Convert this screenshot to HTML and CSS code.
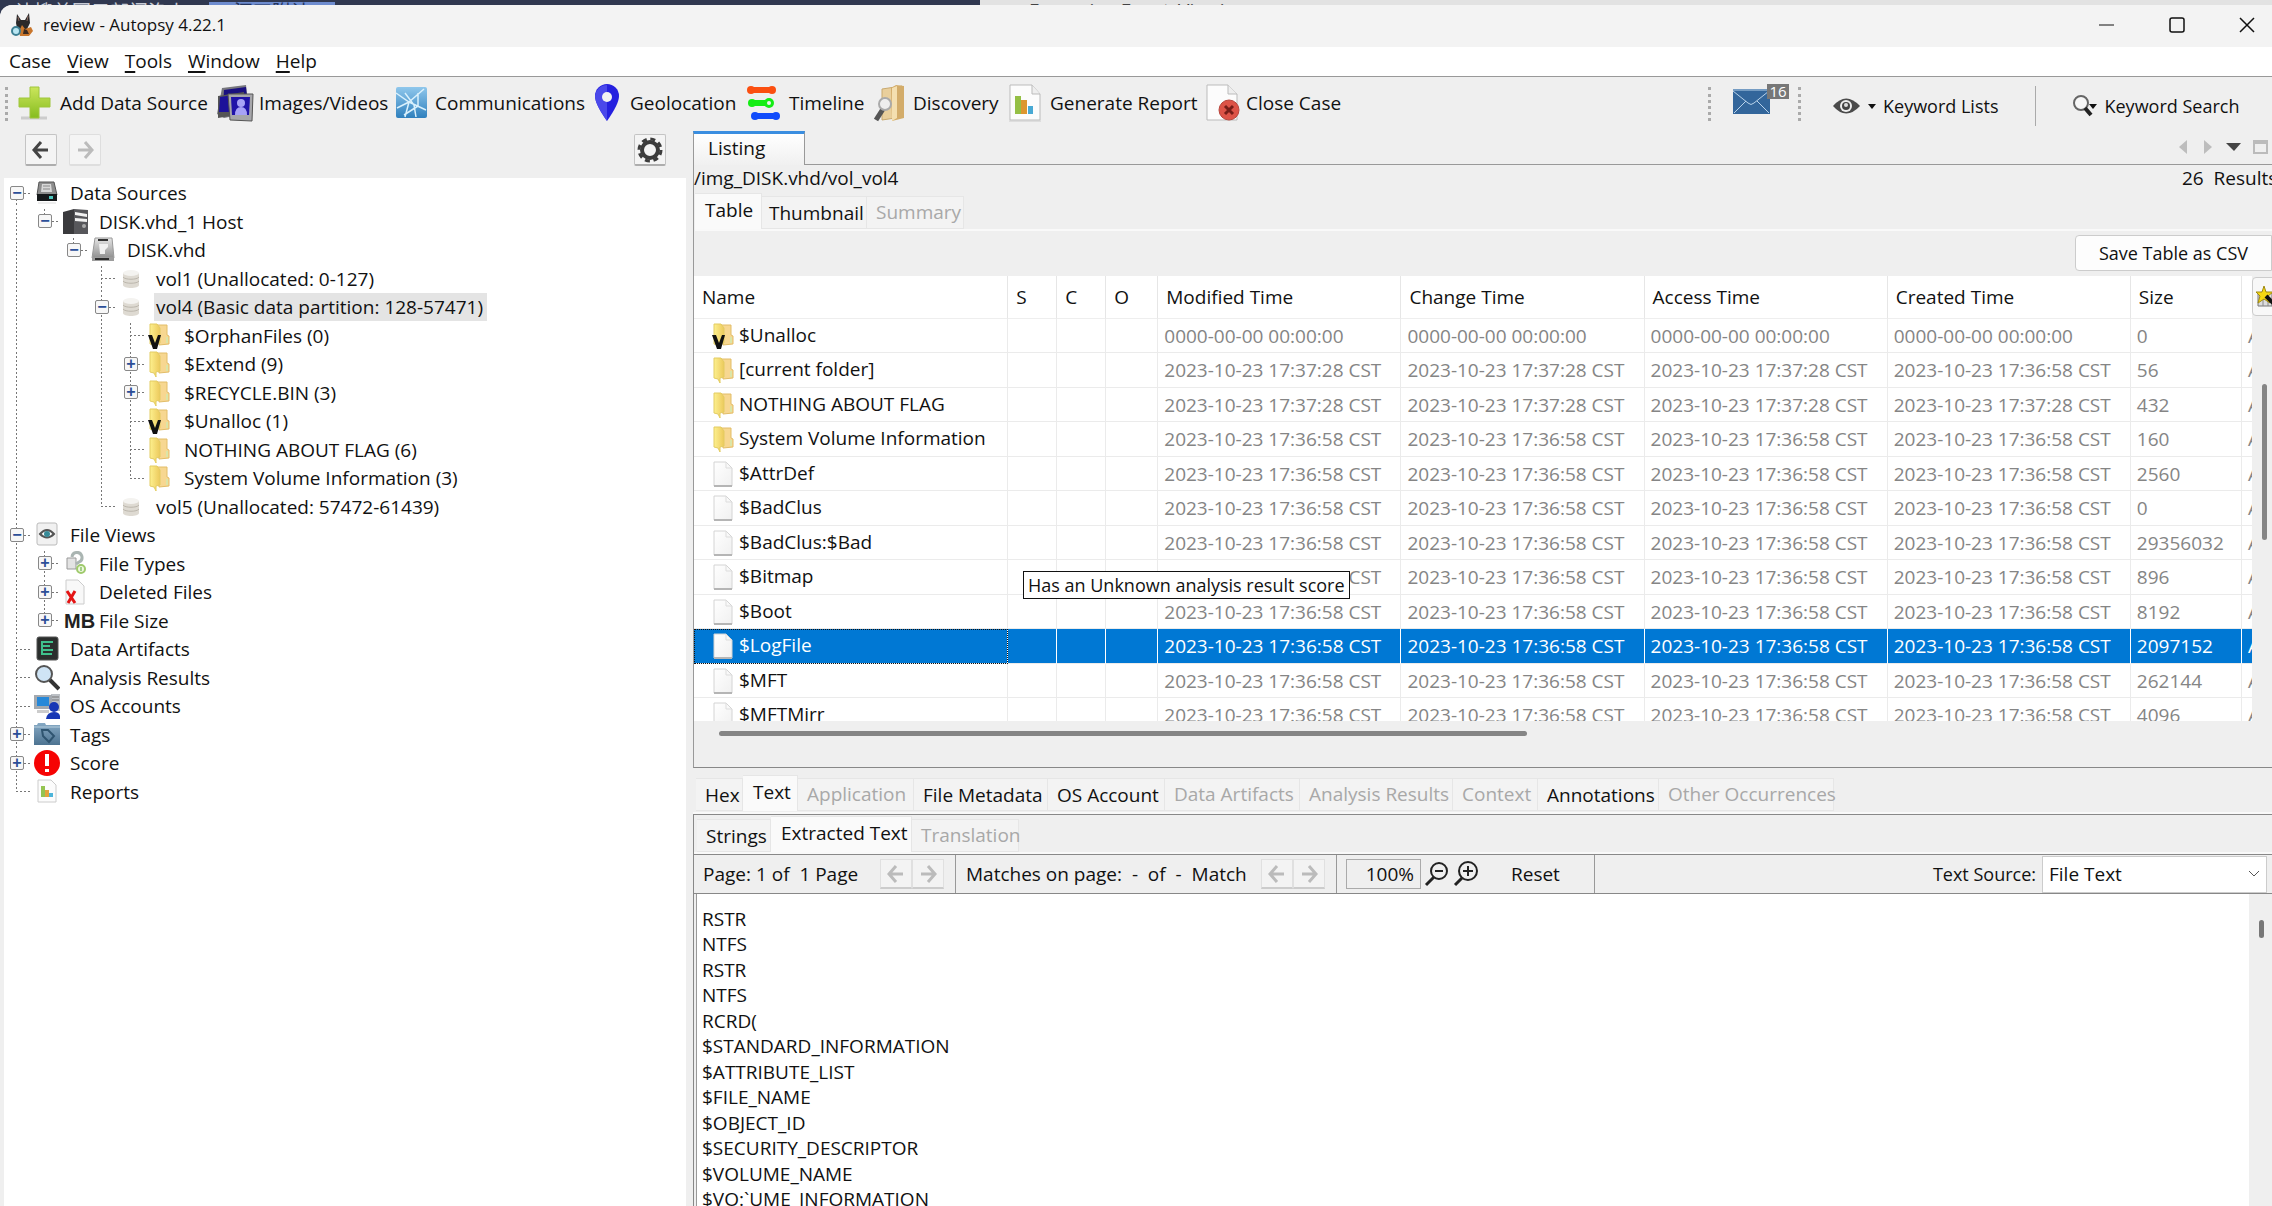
FILE: index.html
```html
<!DOCTYPE html>
<html lang="en">
<head>
<meta charset="utf-8">
<title>review - Autopsy 4.22.1</title>
<link rel="stylesheet" href="styles.css">
</head>
<body>
<svg class="defs" aria-hidden="true">
  <defs>
    <linearGradient id="gold" x1="0" x2="1"><stop offset="0" stop-color="#fdf08e"/><stop offset="1" stop-color="#ecc95c"/></linearGradient>
    <linearGradient id="steel" x1="0" x2="0" y1="0" y2="1"><stop offset="0" stop-color="#e6e6e6"/><stop offset="1" stop-color="#8f8f8f"/></linearGradient>
    <linearGradient id="lime" x1="0" x2="0" y1="0" y2="1"><stop offset="0" stop-color="#cbe65c"/><stop offset="1" stop-color="#86bc1e"/></linearGradient>
    <linearGradient id="sky" x1="0" x2="0" y1="0" y2="1"><stop offset="0" stop-color="#8fc7ec"/><stop offset="1" stop-color="#2f80bd"/></linearGradient>
    <linearGradient id="slate" x1="0" x2="0" y1="0" y2="1"><stop offset="0" stop-color="#86a9c4"/><stop offset="1" stop-color="#4d7391"/></linearGradient>
    <linearGradient id="paper" x1="0" x2="1" y1="0" y2="1"><stop offset="0" stop-color="#fff"/><stop offset="1" stop-color="#f0f0f0"/></linearGradient>
    <symbol id="folder" viewBox="0 0 26 26"><path d="M9 2h10v10l2 1v8l-10 1z" fill="#f7d791" stroke="#e2bd68"/><path d="M18 14h2v6h-2z" fill="#dbe5a8"/><path d="M2 1h7l3 4v15l-4 1v5l-2-4-4-1z" fill="url(#gold)" stroke="#e3cc62"/></symbol>
    <symbol id="vfolder" viewBox="0 0 26 26"><use href="#folder"/><path d="M0 12h4l3 8 3-8h3L9 26H5z" fill="#111"/></symbol>
    <symbol id="file" viewBox="0 0 26 26"><path d="M2 1h12l6 6v18H2z" fill="url(#paper)" stroke="#d4d4d4"/><path d="M2 25h18" stroke="#b5b5b5" stroke-width="2"/><path d="M14 1v6h6" fill="none" stroke="#ddd"/></symbol>
    <symbol id="drum" viewBox="0 0 26 26"><path d="M3 7v12c0 4 16 4 16 0V7z" fill="#dedad2"/><ellipse cx="11" cy="7" rx="8" ry="3" fill="#f4f3f0"/><path d="M3 11c2 3 14 3 16 0M3 15c2 3 14 3 16 0" fill="none" stroke="#bcb7ad"/></symbol>
    <symbol id="drive" viewBox="0 0 26 26"><path d="M5 2h15l3 13H3z" fill="#8d8d8d" stroke="#555"/><path d="M8 4h9l1 8H7z" fill="#d8d8d8"/><path d="M9 6h7M9 9h7" stroke="#888"/><path d="M3 14h20v7H3z" fill="#16191b"/><path d="M15 16h4v3h-4z" fill="#4cc7be"/><path d="M4 23h18" stroke="#ddd"/></symbol>
    <symbol id="tower" viewBox="0 0 26 26"><path d="M0 3l11-3v25H0z" fill="#3a3a3d"/><path d="M11 0l14 1v24H11z" fill="#57575b"/><path d="M12 3l12 2v3L12 6zM12 9l12 1v3l-12-1z" fill="#f2f2f2"/><circle cx="21" cy="17" r="2" fill="#aaa"/></symbol>
    <symbol id="hdd" viewBox="0 0 26 26"><path d="M4 1h17l2 20H1z" fill="url(#steel)" stroke="#999"/><path d="M7 2h10v2H7z" fill="#333"/><path d="M8 7h9v3l-3 3v4H9z" fill="#f0f0f0"/><path d="M1 20h22v4H1z" fill="#9c9c9c"/><path d="M4 22h14" stroke="#2c2c2c" stroke-width="2"/></symbol>
    <symbol id="views" viewBox="0 0 26 26"><rect x="3" y="1" width="20" height="22" rx="2" fill="#f1f1f1" stroke="#bbb"/><path d="M6 12q7-8 14 0q-7 7-14 0z" fill="#fff" stroke="#555" stroke-width="2"/><circle cx="13" cy="12" r="3" fill="#378a97"/></symbol>
    <symbol id="types" viewBox="0 0 26 26"><path d="M4 7h9v11H4z" fill="#e3e3e3" stroke="#999"/><path d="M9 6a5 5 0 1 1 7 5l-3 2" fill="none" stroke="#aab5b2" stroke-width="3"/><circle cx="18" cy="18" r="4" fill="#eef8df" stroke="#9fca6c" stroke-width="2"/><path d="M18 16v4" stroke="#57a536"/></symbol>
    <symbol id="deleted" viewBox="0 0 26 26"><path d="M3 1h12l6 6v18H3z" fill="#f8f8f8" stroke="#ccc"/><path d="M4 12l8 12M12 12L5 24" stroke="#e41414" stroke-width="3"/></symbol>
    <symbol id="artifacts" viewBox="0 0 26 26"><rect x="3" y="1" width="21" height="23" rx="2" fill="#2b2e2d" stroke="#555"/><path d="M7 6h12M7 10h9M7 14h12M7 18h11" fill="none" stroke="#3fc08c" stroke-width="2"/><path d="M8 6v12" stroke="#3fc08c" stroke-width="2"/></symbol>
    <symbol id="lens" viewBox="0 0 26 26"><path d="M15 14l10 10" stroke="#333" stroke-width="4"/><circle cx="10" cy="9" r="8" fill="#cfe4f5" stroke="#555" stroke-width="2"/></symbol>
    <symbol id="accounts" viewBox="0 0 26 26"><path d="M17 1h9v17h-9z" fill="#bcc0c5"/><path d="M18 4h7M18 7h7" stroke="#777"/><path d="M0 2h18v14H0z" fill="#a4a9af"/><path d="M3 4h12v9H3z" fill="#2788d8"/><path d="M3 17h12v3H3z" fill="#ccc"/><circle cx="20" cy="14" r="5" fill="#1737b5"/><path d="M12 26q1-7 8-7t6 7z" fill="#1737b5"/></symbol>
    <symbol id="tags" viewBox="0 0 26 26"><path d="M0 3h3l1-2h7l1 2h14v20H0z" fill="url(#slate)"/><path d="M8 8h6l6 6-5 6-6-6z" fill="none" stroke="#2f5470" stroke-width="2"/><path d="M0 5h26" stroke="#b6cede"/></symbol>
    <symbol id="score" viewBox="0 0 26 26"><circle cx="13" cy="13" r="13" fill="#f60303"/><path d="M13 4v12M13 19v3" stroke="#fff" stroke-width="4"/></symbol>
    <symbol id="report" viewBox="0 0 26 26"><path d="M4 1h13l5 5v17H4z" fill="#fcfcfc" stroke="#ccc"/><path d="M7 7h4v11H7z" fill="#94c451"/><path d="M11 11h4v7h-4z" fill="#e3a33c"/><path d="M15 14h4v4h-4z" fill="#4db5da"/></symbol>
    <symbol id="left" viewBox="0 0 22 22"><path d="M11 3L4 11l7 8M4 11h14" fill="none" stroke="currentColor" stroke-width="3"/></symbol>
    <symbol id="right" viewBox="0 0 22 22"><path d="M11 3l7 8-7 8M18 11H4" fill="none" stroke="currentColor" stroke-width="3"/></symbol>
  </defs>
</svg>

<div class="backdrop" aria-hidden="true"><span class="bd-a">让搜首回示部门洛人</span><span class="bd-b">添刀附计</span><span class="bd-c">Forensics_Event_Viewing</span></div>

<div class="window">
  <header class="titlebar">
    <svg width="24" height="24" viewBox="0 0 24 24"><path d="M6 1l4 6h4l4-7 1 10-3 6-4 2-6-3-1-5z" fill="#2a2829"/><path d="M7 4l1 4M17 3l-1 5" stroke="#8b6a61"/><path d="M11 12l3 4 6-2 2 4-4 5H9l-1-5z" fill="#c9762c"/><path d="M13 16l3 1 2 4h-6z" fill="#3a2a20"/><circle cx="5" cy="18" r="4" fill="#b9e6f2" stroke="#3d7f93" stroke-width="2"/></svg>
    <span class="caption">review - Autopsy 4.22.1</span>
    <div class="winctl">
      <button aria-label="Minimize"><svg width="18" height="18" viewBox="0 0 18 18"><path d="M1 9h15" stroke="#111" stroke-width="1"/></svg></button>
      <button aria-label="Maximize"><svg width="18" height="18" viewBox="0 0 18 18"><rect x="2" y="2" width="14" height="14" rx="2" fill="none" stroke="#111" stroke-width="1.5"/></svg></button>
      <button aria-label="Close"><svg width="18" height="18" viewBox="0 0 18 18"><path d="M2 2l14 14M16 2L2 16" stroke="#111" stroke-width="1.5"/></svg></button>
    </div>
  </header>

  <nav class="menubar">
    <button>Case</button><button><u>V</u>iew</button><button><u>T</u>ools</button><button><u>W</u>indow</button><button><u>H</u>elp</button>
  </nav>

  <div class="toolbar">
    <span class="grip"></span>
    <div class="tools">
      <button><svg width="42" height="38" viewBox="0 0 42 38"><path d="M3 34h26" stroke="#ccc" stroke-width="3"/><path d="M12 3h9v11h11v9H21v11h-9V23H1v-9h11z" fill="url(#lime)" stroke="#9fc63c"/></svg>Add Data Source</button>
      <button><svg width="42" height="38" viewBox="0 0 42 38"><path d="M5 4l24-3 3 28-25 5-7-4z" fill="#77777d"/><path d="M7 6l22-3 2 20H6z" fill="#1a1080"/><path d="M1 12l26-4-2 22-24 4z" fill="#555"/><path d="M3 13l20-3v18H2z" fill="#1d1299"/><path d="M11 10h25l-1 27-22-1z" fill="#a6a6aa" stroke="#555"/><path d="M14 13h19l-1 18H15z" fill="#2013a8"/><circle cx="24" cy="19" r="4" fill="#a7a2f6"/><path d="M18 31q0-8 6-8t6 8z" fill="#a7a2f6"/></svg>Images/Videos</button>
      <button><svg width="42" height="38" viewBox="0 0 42 38"><rect x="3" y="3" width="31" height="31" rx="2" fill="url(#sky)"/><path d="M3 9l13 9L31 5M16 18l-4 15M16 18l17 8M12 9l9 12 2 12M25 9v13l-14 9M4 24l12-6" fill="none" stroke="#d9f0fc" stroke-width="1.5"/></svg>Communications</button>
      <button><svg width="42" height="38" viewBox="0 0 42 38"><path d="M19 37Q7 20 7 12a12 12 0 0 1 24 0Q31 20 19 37z" fill="#2520df"/><path d="M19 37Q7 20 7 12A12 12 0 0 1 19 1z" fill="#4a48ea"/><circle cx="19" cy="13" r="5" fill="#f2f2f2"/></svg>Geolocation</button>
      <button><svg width="42" height="38" viewBox="0 0 42 38"><g stroke-width="6"><path d="M4 6h20" stroke="#fb4f10"/><path d="M5 19h18" stroke="#14ed14"/><path d="M8 32h20" stroke="#114cfb"/></g><g fill="#fb4f10"><circle cx="4" cy="6" r="4"/><circle cx="25" cy="6" r="4"/></g><g fill="#14ed14"><circle cx="5" cy="19" r="4"/><circle cx="22" cy="19" r="5"/></g><g fill="#114cfb"><circle cx="8" cy="32" r="4"/><circle cx="29" cy="32" r="4"/></g><circle cx="22" cy="19" r="2" fill="#efefef"/></svg>Timeline</button>
      <button><svg width="42" height="38" viewBox="0 0 42 38"><path d="M11 5l20-3v31l-20 3z" fill="#e9cf9c" stroke="#c9a96e"/><path d="M20 4l5-3 8 1v32l-12 3z" fill="#d3ac6a"/><path d="M21 4l5-2v32l-5 3z" fill="#f4dfb0"/><path d="M12 25L5 36" stroke="#555" stroke-width="5"/><circle cx="14" cy="20" r="6" fill="#eee" stroke="#aaa" stroke-width="2"/></svg>Discovery</button>
      <button><svg width="42" height="38" viewBox="0 0 42 38"><path d="M2 1h22l8 9v26H2z" fill="#fcfcfc" stroke="#bbb"/><path d="M24 1v9h8" fill="#eee" stroke="#bbb"/><path d="M7 12h6v18H7z" fill="#94bf45"/><path d="M13 16h6v14h-6z" fill="#dc962f"/><path d="M20 22h5v8h-5z" fill="#48a9d4"/><path d="M1 37h32" stroke="#ccc"/></svg>Generate Report</button>
      <button><svg width="42" height="38" viewBox="0 0 42 38"><path d="M3 1h21l9 9v26H3z" fill="#fcfcfc" stroke="#bbb"/><path d="M24 1v9h9" fill="#eee" stroke="#bbb"/><circle cx="25" cy="26" r="10" fill="#dd5347" stroke="#b8463d"/><path d="M21 22l8 8M29 22l-8 8" stroke="#761d18" stroke-width="3"/></svg>Close Case</button>
    </div>
    <div class="search-tools">
      <span class="grip"></span>
      <button class="mail" aria-label="Messages"><svg width="37" height="25" viewBox="0 0 37 25"><rect width="37" height="25" fill="#33669b"/><path d="M0 2l15 12q3 3 6 0L36 2M1 24l12-12M36 24L24 12M0 1h37" fill="none" stroke="#b8d2ea"/></svg><span class="count">16</span></button>
      <span class="grip"></span>
      <button class="kw lists"><svg width="44" height="22" viewBox="0 0 44 22"><path d="M1 11q13-15 27 0q-14 15-27 0z" fill="#4a4a4a"/><circle cx="14" cy="11" r="6" fill="#eee"/><circle cx="14" cy="11" r="4" fill="#444"/><circle cx="14" cy="10" r="2" fill="#ddd"/><path d="M36 9h8l-4 5z" fill="#111"/></svg>Keyword Lists</button>
      <span class="vsep"></span>
      <button class="kw"><svg width="24" height="22" viewBox="0 0 24 22"><circle cx="8" cy="8" r="7" fill="#f7f7f7" stroke="#666" stroke-width="2"/><path d="M12 13l6 7" stroke="#222" stroke-width="4"/><path d="M16 9h8l-4 5z" fill="#111"/></svg>Keyword Search</button>
    </div>
  </div>

  <main class="workspace">
    <section class="explorer">
      <div class="navrow">
        <button class="sq" aria-label="Back"><svg width="22" height="22"><use href="#left"/></svg></button>
        <button class="sq" aria-label="Forward" disabled><svg width="22" height="22"><use href="#right"/></svg></button>
        <button class="sq gear" aria-label="Options"><svg width="26" height="26" viewBox="0 0 26 26"><circle cx="13" cy="13" r="8" fill="none" stroke="#3c3c3c" stroke-width="4"/><circle cx="13" cy="13" r="11" fill="none" stroke="#3c3c3c" stroke-width="3" stroke-dasharray="5 3.64"/></svg></button>
      </div>
      <ul class="tree">
        <li><i class="last-up"><button>−</button></i><svg><use href="#drive"/></svg><span>Data Sources</span></li>
        <li><i class="v"></i><i class="end"><button>−</button></i><svg><use href="#tower"/></svg><span>DISK.vhd_1 Host</span></li>
        <li><i class="v"></i><i></i><i class="end"><button>−</button></i><svg><use href="#hdd"/></svg><span>DISK.vhd</span></li>
        <li><i class="v"></i><i></i><i></i><i class="v h"></i><svg><use href="#drum"/></svg><span>vol1 (Unallocated: 0-127)</span></li>
        <li><i class="v"></i><i></i><i></i><i class="v h"><button>−</button></i><svg><use href="#drum"/></svg><span class="sel">vol4 (Basic data partition: 128-57471)</span></li>
        <li><i class="v"></i><i></i><i></i><i class="v"></i><i class="v h"></i><svg><use href="#vfolder"/></svg><span>$OrphanFiles (0)</span></li>
        <li><i class="v"></i><i></i><i></i><i class="v"></i><i class="v h"><button>+</button></i><svg><use href="#folder"/></svg><span>$Extend (9)</span></li>
        <li><i class="v"></i><i></i><i></i><i class="v"></i><i class="v h"><button>+</button></i><svg><use href="#folder"/></svg><span>$RECYCLE.BIN (3)</span></li>
        <li><i class="v"></i><i></i><i></i><i class="v"></i><i class="v h"></i><svg><use href="#vfolder"/></svg><span>$Unalloc (1)</span></li>
        <li><i class="v"></i><i></i><i></i><i class="v"></i><i class="v h"></i><svg><use href="#folder"/></svg><span>NOTHING ABOUT FLAG (6)</span></li>
        <li><i class="v"></i><i></i><i></i><i class="v"></i><i class="end"></i><svg><use href="#folder"/></svg><span>System Volume Information (3)</span></li>
        <li><i class="v"></i><i></i><i></i><i class="end"></i><svg><use href="#drum"/></svg><span>vol5 (Unallocated: 57472-61439)</span></li>
        <li><i class="v h"><button>−</button></i><svg><use href="#views"/></svg><span>File Views</span></li>
        <li><i class="v"></i><i class="v h"><button>+</button></i><svg><use href="#types"/></svg><span>File Types</span></li>
        <li><i class="v"></i><i class="v h"><button>+</button></i><svg><use href="#deleted"/></svg><span>Deleted Files</span></li>
        <li><i class="v"></i><i class="end"><button>+</button></i><b>MB</b><span>File Size</span></li>
        <li><i class="v h"></i><svg><use href="#artifacts"/></svg><span>Data Artifacts</span></li>
        <li><i class="v h"></i><svg><use href="#lens"/></svg><span>Analysis Results</span></li>
        <li><i class="v h"></i><svg><use href="#accounts"/></svg><span>OS Accounts</span></li>
        <li><i class="v h"><button>+</button></i><svg><use href="#tags"/></svg><span>Tags</span></li>
        <li><i class="v h"><button>+</button></i><svg><use href="#score"/></svg><span>Score</span></li>
        <li><i class="end"></i><svg><use href="#report"/></svg><span>Reports</span></li>
      </ul>
    </section>

    <section class="content">
      <div class="doc-tabs">
        <button class="doc-tab">Listing</button>
        <div class="doc-ctl"><svg width="94" height="16" viewBox="0 0 94 16"><path d="M9 1v14L1 8z" fill="#bdbdbd"/><path d="M26 1v14l8-7z" fill="#bdbdbd"/><path d="M48 4h15l-7 8z" fill="#444"/><path d="M76 2h13v12H76zM76 4h13" fill="none" stroke="#bbb" stroke-width="2"/></svg></div>
      </div>

      <div class="listing">
        <div class="pathrow"><span>/img_DISK.vhd/vol_vol4</span><span class="results">26&nbsp; Results</span></div>
        <div class="tabs view-tabs">
          <button class="on">Table</button><button>Thumbnail</button><button disabled>Summary</button>
        </div>
        <div class="csvrow"><button class="csv">Save Table as CSV</button></div>
        <div class="grid-area">
          <div class="grid-clip">
            <table>
              <colgroup><col class="c-name"><col class="c-s"><col class="c-s"><col class="c-o"><col class="c-t"><col class="c-t"><col class="c-t"><col class="c-t"><col class="c-size"><col class="c-x"></colgroup>
              <thead><tr><th>Name</th><th>S</th><th>C</th><th>O</th><th>Modified Time</th><th>Change Time</th><th>Access Time</th><th>Created Time</th><th>Size</th><th></th></tr></thead>
              <tbody>
                <tr><td><svg><use href="#vfolder"/></svg>$Unalloc</td><td></td><td></td><td></td><td>0000-00-00 00:00:00</td><td>0000-00-00 00:00:00</td><td>0000-00-00 00:00:00</td><td>0000-00-00 00:00:00</td><td>0</td><td>A</td></tr>
                <tr><td><svg><use href="#folder"/></svg>[current folder]</td><td></td><td></td><td></td><td>2023-10-23 17:37:28 CST</td><td>2023-10-23 17:37:28 CST</td><td>2023-10-23 17:37:28 CST</td><td>2023-10-23 17:36:58 CST</td><td>56</td><td>A</td></tr>
                <tr><td><svg><use href="#folder"/></svg>NOTHING ABOUT FLAG</td><td></td><td></td><td></td><td>2023-10-23 17:37:28 CST</td><td>2023-10-23 17:37:28 CST</td><td>2023-10-23 17:37:28 CST</td><td>2023-10-23 17:37:28 CST</td><td>432</td><td>A</td></tr>
                <tr><td><svg><use href="#folder"/></svg>System Volume Information</td><td></td><td></td><td></td><td>2023-10-23 17:36:58 CST</td><td>2023-10-23 17:36:58 CST</td><td>2023-10-23 17:36:58 CST</td><td>2023-10-23 17:36:58 CST</td><td>160</td><td>A</td></tr>
                <tr><td><svg><use href="#file"/></svg>$AttrDef</td><td></td><td></td><td></td><td>2023-10-23 17:36:58 CST</td><td>2023-10-23 17:36:58 CST</td><td>2023-10-23 17:36:58 CST</td><td>2023-10-23 17:36:58 CST</td><td>2560</td><td>A</td></tr>
                <tr><td><svg><use href="#file"/></svg>$BadClus</td><td></td><td></td><td></td><td>2023-10-23 17:36:58 CST</td><td>2023-10-23 17:36:58 CST</td><td>2023-10-23 17:36:58 CST</td><td>2023-10-23 17:36:58 CST</td><td>0</td><td>A</td></tr>
                <tr><td><svg><use href="#file"/></svg>$BadClus:$Bad</td><td></td><td></td><td></td><td>2023-10-23 17:36:58 CST</td><td>2023-10-23 17:36:58 CST</td><td>2023-10-23 17:36:58 CST</td><td>2023-10-23 17:36:58 CST</td><td>29356032</td><td>A</td></tr>
                <tr><td><svg><use href="#file"/></svg>$Bitmap</td><td></td><td></td><td></td><td>2023-10-23 17:36:58 CST</td><td>2023-10-23 17:36:58 CST</td><td>2023-10-23 17:36:58 CST</td><td>2023-10-23 17:36:58 CST</td><td>896</td><td>A</td></tr>
                <tr><td><svg><use href="#file"/></svg>$Boot</td><td></td><td></td><td></td><td>2023-10-23 17:36:58 CST</td><td>2023-10-23 17:36:58 CST</td><td>2023-10-23 17:36:58 CST</td><td>2023-10-23 17:36:58 CST</td><td>8192</td><td>A</td></tr>
                <tr class="picked"><td><svg><use href="#file"/></svg>$LogFile</td><td></td><td></td><td></td><td>2023-10-23 17:36:58 CST</td><td>2023-10-23 17:36:58 CST</td><td>2023-10-23 17:36:58 CST</td><td>2023-10-23 17:36:58 CST</td><td>2097152</td><td>A</td></tr>
                <tr><td><svg><use href="#file"/></svg>$MFT</td><td></td><td></td><td></td><td>2023-10-23 17:36:58 CST</td><td>2023-10-23 17:36:58 CST</td><td>2023-10-23 17:36:58 CST</td><td>2023-10-23 17:36:58 CST</td><td>262144</td><td>A</td></tr>
                <tr><td><svg><use href="#file"/></svg>$MFTMirr</td><td></td><td></td><td></td><td>2023-10-23 17:36:58 CST</td><td>2023-10-23 17:36:58 CST</td><td>2023-10-23 17:36:58 CST</td><td>2023-10-23 17:36:58 CST</td><td>4096</td><td>A</td></tr>
              </tbody>
            </table>
          </div>
          <div class="side-col">
            <button class="wizard" aria-label="Choose columns"><svg width="24" height="24" viewBox="0 0 24 24"><path d="M3 8h14v13H3z" fill="#ddd" stroke="#777"/><path d="M8 9v12M13 9v12" stroke="#888"/><path d="M9 1l2 6 7 0-5 4 2 7-6-4-6 4 2-7-4-4 6 0z" fill="#f6d912" stroke="#a08a10"/><path d="M11 11l11 11" stroke="#111" stroke-width="4"/></svg></button>
            <span class="vthumb"></span>
          </div>
          <div class="tooltip" role="tooltip">Has an Unknown analysis result score</div>
        </div>
        <div class="hscroll"><span class="hthumb"></span></div>
      </div>

      <div class="tabs viewer-tabs">
        <button>Hex</button><button class="on">Text</button><button disabled>Application</button><button>File Metadata</button><button>OS Account</button><button disabled>Data Artifacts</button><button disabled>Analysis Results</button><button disabled>Context</button><button>Annotations</button><button disabled>Other Occurrences</button>
      </div>

      <div class="viewer">
        <div class="tabs text-tabs">
          <button>Strings</button><button class="on">Extracted Text</button><button disabled>Translation</button>
        </div>
        <div class="textbar">
          <div class="seg page"><span class="words">Page: 1 of&nbsp; 1 Page</span><span class="pair"><button aria-label="Previous page" disabled><svg width="22" height="22"><use href="#left"/></svg></button><button aria-label="Next page" disabled><svg width="22" height="22"><use href="#right"/></svg></button></span></div>
          <div class="seg match"><span class="words">Matches on page:&nbsp; -&nbsp; of&nbsp; -&nbsp; Match</span><span class="pair"><button aria-label="Previous match" disabled><svg width="22" height="22"><use href="#left"/></svg></button><button aria-label="Next match" disabled><svg width="22" height="22"><use href="#right"/></svg></button></span></div>
          <div class="seg zoom">
            <input type="text" value="100%" aria-label="Zoom level" readonly>
            <button aria-label="Zoom out"><svg width="26" height="26" viewBox="0 0 26 26"><circle cx="15" cy="10" r="8" fill="none" stroke="#222" stroke-width="2"/><path d="M10 16l-8 8" stroke="#222" stroke-width="3"/><path d="M11 10h8" stroke="#222" stroke-width="2"/></svg></button>
            <button aria-label="Zoom in"><svg width="26" height="26" viewBox="0 0 26 26"><circle cx="15" cy="10" r="9" fill="none" stroke="#222" stroke-width="2"/><path d="M9 17l-7 7" stroke="#222" stroke-width="3"/><path d="M10 10h10M15 5v10" stroke="#222" stroke-width="2"/></svg></button>
            <button class="reset">Reset</button>
          </div>
          <label for="source">Text Source:</label>
          <div class="combo"><select id="source"><option>File Text</option></select><svg width="12" height="8" viewBox="0 0 12 8"><path d="M1 1l5 5 5-5" fill="none" stroke="#555"/></svg></div>
        </div>
        <div class="textpane">
          <div class="lines"><p>RSTR</p><p>NTFS</p><p>RSTR</p><p>NTFS</p><p>RCRD(</p><p>$STANDARD_INFORMATION</p><p>$ATTRIBUTE_LIST</p><p>$FILE_NAME</p><p>$OBJECT_ID</p><p>$SECURITY_DESCRIPTOR</p><p>$VOLUME_NAME</p><p>$VO:`UME_INFORMATION</p></div>
          <div class="rail"><span class="rthumb"></span></div>
        </div>
      </div>
    </section>
  </main>
</div>
</body>
</html>
```
FILE: styles.css
```css
* { box-sizing: border-box; }
html, body { height: 100%; }
body {
  margin: 0;
  display: flex;
  flex-direction: column;
  overflow: hidden;
  background: #303850;
  color: #111;
  font: 19px/24px "Open Sans", "Noto Sans CJK SC", sans-serif;
  white-space: nowrap;
}
button, input, select { font: inherit; color: inherit; }
button { margin: 0; padding: 0; border: 0; background: none; white-space: nowrap; }
svg { display: block; flex: none; }
.defs { position: absolute; width: 0; height: 0; }

/* sliver of the windows behind this one */
.backdrop { flex: none; display: grid; grid-template-columns: 209px 126px 645px 1fr; height: 5px; overflow: hidden; align-items: end; line-height: 20px; color: #c8ccd6; }
.bd-a { padding-left: 15px; }
.bd-b { background: #6e8ccf; color: #24345e; text-align: center; }
.bd-c { grid-column: 4; padding-left: 49px; background: #e2e2e2; color: #444; border-bottom: 2px solid #aaa; }

.window { flex: 1; min-height: 0; display: flex; flex-direction: column; background: #efefef; border-radius: 12px 0 0 0; overflow: hidden; }

.titlebar { flex: none; display: flex; align-items: center; height: 42px; padding: 0 16px 2px 11px; background: #f3f3f3; font-size: 17px; }
.caption { flex: 1; padding-left: 8px; }
.winctl { display: flex; gap: 52px; }

.menubar { flex: none; display: flex; gap: 16px; height: 30px; padding: 0 9px 2px; align-items: center; background: #fff; border-bottom: 1px solid #999; }
.menubar u { text-underline-offset: 3px; text-decoration-thickness: 2px; }

.toolbar { flex: none; display: flex; align-items: center; height: 53px; padding-left: 5px; }
.grip { flex: none; width: 3px; height: 34px; border-left: 3px dotted #aaa; }
.tools { display: grid; grid-template-columns: 199px 176px 195px 159px 124px 137px 196px auto; margin: 0 0 2px 10px; }
.tools button, .kw { display: flex; align-items: center; }
.search-tools { display: flex; align-items: center; width: 565px; height: 53px; margin-left: auto; padding-left: 1px; }
.mail { position: relative; margin: 0 28px 0 22px; }
.mail svg { margin-top: -4px; }
.count { position: absolute; left: 34px; top: -9px; width: 22px; background: #777; color: #fff; font-size: 15px; line-height: 15px; }
.kw { height: 24px; margin-top: 5px; font-size: 18px; }
.lists { margin-left: 31px; gap: 7px; }
.kw:last-child { gap: 7px; }
.vsep { width: 1px; height: 40px; margin: 4px 37px 0; background: #aaa; }

.workspace { flex: 1; min-height: 0; display: grid; grid-template-columns: 693px 1fr; }

.explorer { display: flex; flex-direction: column; min-height: 0; padding: 0 7px 0 4px; }
.navrow { flex: none; display: flex; gap: 12px; height: 48px; padding: 4px 20px 0 21px; }
.sq { display: grid; place-items: center; width: 32px; height: 32px; border: 1px solid #c4c4c4; border-bottom: 2px solid #adadad; border-radius: 2px; background: #f4f4f4; color: #444; }
.sq:disabled { border-color: #dedede; color: #bbb; }
.gear { margin-left: auto; }

.tree { flex: 1; display: grid; grid-auto-rows: 28px 29px; align-content: start; margin: 0; padding: 1px 0 0; list-style: none; background: #fff; overflow: hidden; }
.tree li { display: flex; align-items: center; }
.tree svg { width: 26px; height: 26px; margin: 0 10px 0 2px; }
.tree li b { width: 38px; padding-left: 3px; font: bold 20px/24px "Liberation Sans", sans-serif; color: #222; }
.tree span { padding: 0 4px 0 2px; margin-left: -2px; line-height: 28px; }
.tree .sel { background: #e4e4e4; }
.tree i { flex: none; position: relative; align-self: stretch; width: 28px; padding: 7px 0 0 6px; }
.tree i:nth-of-type(even) { width: 29px; }
.tree .v, .tree .end { background: linear-gradient(#fff 50%, #777 50%) 12px 0 / 1px 4px repeat-y; }
.tree .end::before { content: ""; position: absolute; inset: 15px 10px 0 6px; background: #fff; }
.tree .h::after, .tree .end::after, .tree .last-up::after { content: ""; position: absolute; left: 12px; right: 2px; top: 14px; height: 1px; background: linear-gradient(90deg, #777 50%, #fff 50%) 0 0 / 4px 1px; }
.tree .last-up::before { content: ""; position: absolute; left: 12px; top: 14px; bottom: 0; width: 1px; background: linear-gradient(#fff 50%, #777 50%) 0 0 / 1px 4px; }
.tree i button { position: relative; z-index: 1; display: grid; place-items: center; width: 14px; height: 14px; border: 1px solid #888; border-radius: 2px; background: #f7f7f7; color: #2c4f97; font: bold 16px/12px "Liberation Sans", sans-serif; }

.content { display: flex; flex-direction: column; min-width: 0; min-height: 0; }
.doc-tabs { flex: none; display: flex; height: 35px; padding-top: 1px; }
.doc-tab { width: 112px; padding: 0 0 4px 14px; text-align: left; border: 1px solid #999; border-top: 3px solid #3a8ee0; border-bottom: 0; background: linear-gradient(#fff, #f0f0f0); }
.doc-ctl { flex: 1; display: flex; justify-content: flex-end; padding-top: 8px; border-bottom: 1px solid #999; }

.listing { flex: none; display: flex; flex-direction: column; height: 603px; border-left: 1px solid #999; border-bottom: 1px solid #888; }
.pathrow { flex: none; display: flex; justify-content: space-between; height: 27px; padding-top: 1px; }
.results { width: 90px; }

.tabs { flex: none; display: grid; align-items: end; border-bottom: 2px solid #f9f9f9; }
.tabs button { height: 33px; padding: 0 0 0 9px; text-align: left; background: #f3f3f3; border: 1px solid #e6e6e6; border-width: 1px 1px 1px 0; }
.tabs button:disabled { padding-bottom: 2px; color: #a8a8a8; }
.tabs .on { height: 36px; padding: 0 0 3px 10px; background: #fafafa; border-bottom: 0; }
.view-tabs { height: 39px; margin-left: 1px; grid-template-columns: 67px 105px 97px; }
.viewer-tabs { height: 46px; padding: 0 0 1px 3px; grid-template-columns: 47px 55px 116px 134px 117px 135px 153px 85px 121px 175px; }
.text-tabs { height: 39px; padding-left: 3px; grid-template-columns: 74px 141px 107px; }
.view-tabs button:nth-child(2) { padding-left: 7px; }

.csvrow { flex: none; display: flex; justify-content: flex-end; height: 45px; padding: 4px 0 5px; }
.csv { width: 197px; border: 1px solid #ccc; border-radius: 4px 0 0 4px; background: #fdfdfd; font-size: 18px; }

.grid-area { flex: none; position: relative; display: grid; grid-template-columns: 1fr 20px; height: 445px; }
.grid-clip { overflow: hidden; background: #fff; }
table { width: 1559px; min-width: 100%; border-collapse: separate; border-spacing: 0; table-layout: fixed; }
.c-name { width: 314px; } .c-s { width: 49px; } .c-o { width: 52px; } .c-t { width: 243px; } .c-size { width: 111px; } .c-x { width: 11px; }
th { height: 43px; padding: 0 0 0 8px; font-weight: normal; text-align: left; border-right: 1px solid #e6e6e6; border-bottom: 1px solid #eee; }
td { height: 34px; padding: 0 0 0 6px; color: #858585; border-right: 1px solid #ebebeb; border-bottom: 1px solid #ebebeb; overflow: hidden; }
tr:nth-child(even) td { height: 35px; }
td:first-child { color: #111; padding-left: 18px; }
td svg { float: left; width: 26px; height: 26px; margin-right: 1px; }
th:last-child, td:last-child { border-right: 0; }
tr.picked td, tr.picked td:first-child { background: #0078d4; color: #fff; border-right-color: #fff; }
tr.picked td:first-child { outline: 1px dotted #111; outline-offset: -1px; }
.side-col { position: relative; overflow: hidden; }
.wizard { width: 32px; height: 39px; margin-top: 1px; padding-left: 2px; border: 1px solid #ccc; border-radius: 4px; background: #f8f8f8; }
.vthumb { position: absolute; left: 10px; top: 108px; width: 5px; height: 156px; border-radius: 3px; background: #858585; }
.tooltip { position: absolute; left: 329px; top: 295px; height: 28px; padding: 0 4px; border: 1px solid #111; background: #fff; font-size: 18px; line-height: 26px; }
.hscroll { padding: 10px 0 0 25px; }
.hthumb { display: block; width: 52%; height: 5px; border-radius: 3px; background: #858585; }

.viewer { flex: 1; min-height: 0; display: flex; flex-direction: column; border-left: 1px solid #888; border-top: 1px solid #888; }
.textbar { flex: none; display: flex; align-items: center; height: 40px; padding-right: 5px; border: 1px solid #888; border-width: 1px 0; }
.seg { display: flex; align-items: center; height: 38px; border-right: 1px solid #999; }
.page { width: 262px; padding: 0 11px 0 9px; justify-content: space-between; }
.match { width: 381px; padding: 0 11px 0 10px; justify-content: space-between; }
.zoom { width: 258px; padding-left: 9px; gap: 3px; }
.pair { display: flex; color: #bbb; }
.pair button { display: grid; place-items: center; width: 32px; height: 30px; border: 1px solid #e0e0e0; border-bottom: 2px solid #ccc; background: #f3f3f3; }
.pair button:disabled { color: #bbb; }
.zoom input { width: 75px; height: 30px; padding: 0 6px; border: 1px solid #aaa; background: #efefef; text-align: right; }
.reset { margin-left: 29px; }
.textbar label { margin-left: auto; padding-right: 6px; font-size: 18px; }
.combo { display: flex; align-items: center; width: 225px; height: 37px; padding-right: 6px; background: #fff; border: 1px solid #ccc; }
.combo select { flex: 1; height: 35px; padding: 0 0 0 6px; border: 0; background: none; appearance: none; }

.textpane { flex: 1; min-height: 0; display: grid; grid-template-columns: 1fr 23px; margin-left: 2px; border-left: 1px solid #999; background: #fff; overflow: hidden; }
.lines { display: grid; grid-auto-rows: 25px 26px; align-content: start; padding: 13px 0 0 5px; }
.lines p { margin: 0; }
.rail { padding: 26px 0 0 10px; background: #efefef; }
.rthumb { display: block; width: 5px; height: 18px; border-radius: 3px; background: #777; }
```
